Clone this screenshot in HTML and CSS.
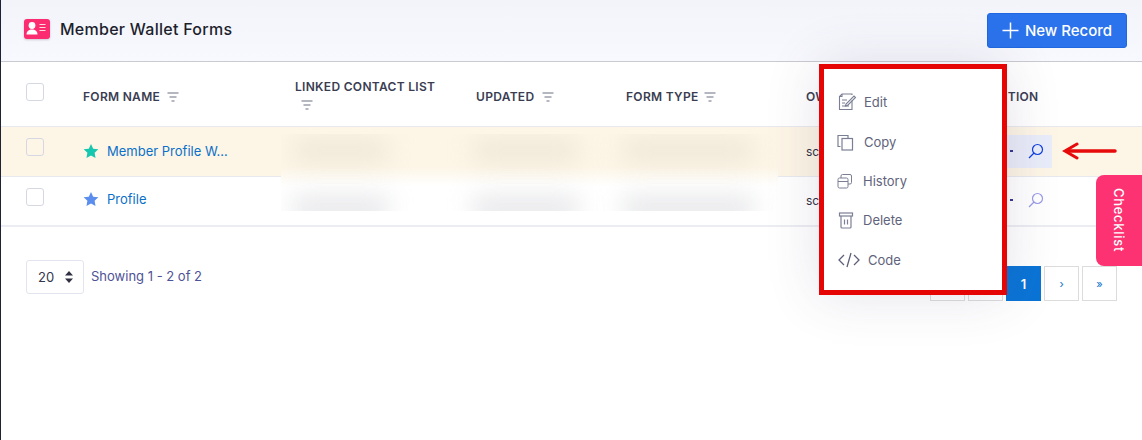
FILE: index.html
```html
<!DOCTYPE html>
<html lang="en">
<head>
<meta charset="utf-8">
<title>Member Wallet Forms</title>
<link rel="stylesheet" href="styles.css">
</head>
<body>
<div class="page">
  <header class="topbar">
    <div class="brand">
      <svg class="logo" width="28" height="22" viewBox="0 0 28 22">
        <rect x="1" y="1" width="26" height="20" rx="3" fill="#fb2c6f"/>
        <circle cx="9" cy="7.500" r="3.400" fill="#fff"/>
        <path d="M3.500 16.500c0-3.500 2.500-5 5.500-5s5.500 1.500 5.500 5z" fill="#fff"/>
        <path d="M16.500 6.500h6M16.500 9.500h6M16.500 12.500h6" stroke="#fdd" stroke-width="1.200"/>
      </svg>
      <h1 class="title">Member Wallet Forms</h1>
    </div>
    <button class="new-btn">
      <svg width="17" height="17" viewBox="0 0 17 17"><path d="M8.500 .5v16M.5 8.500h16" stroke="#fff" stroke-width="1.500"/></svg>
      New Record
    </button>
  </header>

  <table class="grid">
    <colgroup>
      <col class="c1"><col class="c2"><col class="c3"><col class="c4"><col class="c5"><col class="c6"><col>
    </colgroup>
    <thead>
      <tr>
        <th class="check-cell"><span class="box"></span></th>
        <th>FORM NAME <svg class="filt" width="12" height="10" viewBox="0 0 12 10"><path d="M.5 1h11M2.500 5h7M4.500 9h3" stroke="#6d7082" stroke-width="1.100"/></svg></th>
        <th class="wrap">LINKED CONTACT LIST<br><svg class="filt second" width="12" height="10" viewBox="0 0 12 10"><path d="M.5 1h11M2.500 5h7M4.500 9h3" stroke="#6d7082" stroke-width="1.100"/></svg></th>
        <th>UPDATED <svg class="filt" width="12" height="10" viewBox="0 0 12 10"><path d="M.5 1h11M2.500 5h7M4.500 9h3" stroke="#6d7082" stroke-width="1.100"/></svg></th>
        <th>FORM TYPE <svg class="filt tight" width="12" height="10" viewBox="0 0 12 10"><path d="M.5 1h11M2.500 5h7M4.500 9h3" stroke="#6d7082" stroke-width="1.100"/></svg></th>
        <th>OWNER</th>
        <th>ACTION</th>
      </tr>
    </thead>
    <tbody>
      <tr class="hl">
        <td class="check-cell"><span class="box"></span></td>
        <td class="name"><svg class="star" width="16" height="16" viewBox="0 0 24 24"><path d="M12 1.500l3.300 7 7.700 1-5.600 5.300 1.400 7.700-6.800-3.800-6.800 3.800 1.400-7.700L1 9.500l7.700-1z" fill="#15c7ae"/></svg><a class="link">Member Profile W…</a></td>
        <td></td><td></td><td></td>
        <td class="owner">scott</td>
        <td class="act"><span class="act-pill"><span class="dot"></span><svg width="16" height="16" viewBox="0 0 16 16" fill="none"><circle cx="9.500" cy="6.500" r="5" stroke="#0f3fe0" stroke-width="1.200"/><path d="M6 10l-5 5" stroke="#0f3fe0" stroke-width="1.200"/></svg></span></td>
      </tr>
      <tr class="second-row">
        <td class="check-cell"><span class="box"></span></td>
        <td class="name"><svg class="star" width="16" height="16" viewBox="0 0 24 24"><path d="M12 1.500l3.300 7 7.700 1-5.600 5.300 1.400 7.700-6.800-3.800-6.800 3.800 1.400-7.700L1 9.500l7.700-1z" fill="#5b8def"/></svg><a class="link">Profile</a></td>
        <td></td><td></td><td></td>
        <td class="owner">scott</td>
        <td class="act"><span class="act-pill plain"><span class="dot"></span><svg width="16" height="16" viewBox="0 0 16 16" fill="none"><circle cx="9.500" cy="6.500" r="5" stroke="#9a9be8" stroke-width="1.200"/><path d="M6 10l-5 5" stroke="#9a9be8" stroke-width="1.200"/></svg></span></td>
      </tr>
    </tbody>
  </table>

  <footer class="foot">
    <div class="foot-left">
      <div class="size">20
        <svg width="10" height="12" viewBox="0 0 10 12"><path d="M5 0l4 4.500H1zM5 12L1 7.500h8z" fill="#2f3142"/></svg>
      </div>
      <span class="showing">Showing 1 - 2 of 2</span>
    </div>
    <nav class="pager">
      <span class="pg">«</span><span class="pg">‹</span><span class="pg on">1</span><span class="pg">›</span><span class="pg">»</span>
    </nav>
  </footer>

  <div class="smudges">
    <div class="smudge-row">
      <span class="sm s1"></span><span class="sm s2"></span><span class="sm s3"></span>
    </div>
    <div class="smudge-row low">
      <span class="sm s1"></span><span class="sm s2"></span><span class="sm s3"></span>
    </div>
  </div>

  <div class="menu">
    <div class="mi i1">
      <svg width="20" height="20" viewBox="0 0 20 20" fill="none" stroke="#7b7f95" stroke-width="1.100"><path d="M15 8.500V17.500H2.500V4.500L5 2H15V3"/><path d="M5 2v2.500H2.500"/><path d="M5 8h5M5 11h3M5 14h7"/><path d="M9 12l-.5 2 2-.5 8-8-1.500-1.500z"/></svg>
      <span>Edit</span>
    </div>
    <div class="mi i2">
      <svg width="17" height="17" viewBox="0 0 17 17" fill="none" stroke="#7b7f95" stroke-width="1.200"><path d="M3.500 12.500H1V1.500h10V4"/><rect x="5" y="4.500" width="10.500" height="11.500"/></svg>
      <span>Copy</span>
    </div>
    <div class="mi i3">
      <svg width="17" height="17" viewBox="0 0 17 17" fill="none" stroke="#7b7f95" stroke-width="1"><rect x="1" y="5" width="10" height="10" rx="1.500"/><path d="M4 5V3a1.500 1.500 0 0 1 1.500-1.500H13A1.500 1.500 0 0 1 14.500 3v6.500A1.500 1.500 0 0 1 13 11h-2"/><path d="M1 8.500h10"/></svg>
      <span>History</span>
    </div>
    <div class="mi i4">
      <svg width="16" height="17" viewBox="0 0 16 17" fill="none" stroke="#7b7f95" stroke-width="1.200"><rect x="1.500" y="1" width="13" height="3"/><path d="M3 4v11a1 1 0 0 0 1 1h8a1 1 0 0 0 1-1V4"/><path d="M6.500 7.500v5M9.500 7.500v5"/></svg>
      <span>Delete</span>
    </div>
    <div class="mi i5">
      <svg width="22" height="16" viewBox="0 0 22 16" fill="none" stroke="#5c6078" stroke-width="1.300"><path d="M6 3L1 8l5 5M16 3l5 5-5 5M13 1L9 15"/></svg>
      <span>Code</span>
    </div>
  </div>

  <svg class="arrow" width="56" height="18" viewBox="0 0 56 18"><path d="M54 9H6" stroke="#e60a0a" stroke-width="3.500" stroke-linecap="round"/><path d="M16 2L4 9l12 7" fill="none" stroke="#e60a0a" stroke-width="3" stroke-linecap="round"/></svg>

  <div class="checklist"><span>Checklist</span></div>
</div>
</body>
</html>
```
FILE: styles.css
```css
* { box-sizing: border-box; }
html, body { margin: 0; padding: 0; }
body { background: #fff; font-family: Inter, "Noto Sans", sans-serif; color: #2f3142; }
.page { position: relative; width: 1142px; height: 440px; overflow: hidden; border-left: 1px solid #1f2233; }

.topbar { height: 62px; display: flex; align-items: center; justify-content: space-between; padding: 0 15px 1px 22px; background: linear-gradient(#f2f4fa, #f8f9fe); border-bottom: 1px solid #c9cad0; }
.brand { display: flex; align-items: center; gap: 9px; margin-bottom: 2px; }
.logo { display: block; filter: drop-shadow(0 1px 1px rgba(90, 60, 90, .25)); }
.title { margin: 0; font-size: 16px; font-weight: 500; color: #1d1f2e; letter-spacing: .27px; }
.new-btn { width: 140px; height: 35px; display: flex; align-items: center; justify-content: center; gap: 6px; border: 1px solid #1f68e0; border-radius: 3px; background: #2b73ec; color: #fff; font: 500 15px Inter, sans-serif; }

.grid { width: 1141px; border-collapse: collapse; table-layout: fixed; }
.c1 { width: 82px; } .c2 { width: 212px; } .c3 { width: 181px; } .c4 { width: 150px; } .c5 { width: 180px; } .c6 { width: 184px; }
th { height: 64px; padding: 6px 0 0; text-align: left; font-size: 12px; font-weight: 600; letter-spacing: .3px; color: #3a3d52; white-space: nowrap; border-bottom: 1px solid #e8e9ef; }
th.wrap { line-height: 18px; padding-top: 5px; }
.filt { margin-left: 4px; vertical-align: -1px; }
.filt.tight { margin-left: 2px; }
.filt.second { margin-left: 6px; }
td { padding: 0; font-size: 13px; border-bottom: 1px solid #e8e9ef; }
tbody tr { height: 50px; }
tbody tr:last-child td { border-bottom: 2px solid #ecedf3; }
.hl td { background: #fdf5e6; }
.check-cell { vertical-align: top; padding-left: 25px; }
th.check-cell { vertical-align: middle; padding-top: 0; padding-bottom: 4px; }
td.check-cell { padding-top: 11px; }
.box { display: block; width: 18px; height: 18px; border: 1px solid #d5d8e3; border-radius: 3px; background: transparent; }
.name { white-space: nowrap; }
.second-row .name { padding-bottom: 3px; }
.second-row .act { padding-bottom: 2px; }
.star { vertical-align: -3px; margin-right: 8px; }
.link { color: #0a70c9; font-size: 13px; }
.owner { font-size: 12px; color: #2f3142; }
.act-pill { display: inline-flex; align-items: center; gap: 15px; width: 52px; height: 33px; margin-left: 10px; padding-left: 10px; background: #e9ecf9; }
.act-pill.plain { background: none; }
.dot { width: 3px; height: 2px; background: #33368c; }

.foot { display: flex; justify-content: space-between; align-items: flex-start; padding: 33px 25px 0 25px; }
.foot-left { display: flex; align-items: center; gap: 7px; }
.size { width: 58px; height: 34px; display: flex; align-items: center; gap: 10px; padding-left: 11px; border: 1px solid #e3e5ee; border-radius: 3px; font-size: 13px; color: #34374a; }
.showing { font-size: 13px; color: #4e5296; margin-bottom: 2px; }
.pager { display: flex; gap: 3px; margin-top: 6px; }
.pg { width: 35px; height: 35px; display: flex; align-items: center; justify-content: center; border: 1px solid #dcdcdc; font-size: 11px; color: #0a70c9; background: #fff; }
.pg.on { background: #0a74d6; border-color: #0a74d6; color: #fff; font-size: 13px; font-weight: 600; }

.smudges { position: absolute; left: 280px; top: 134px; width: 497px; height: 77px; overflow: hidden; background: linear-gradient(#fdf5e6 0, #fdf5e6 32px, #fff 52px); }
.smudge-row { display: flex; height: 25px; margin-top: 4px; }
.smudge-row.low { height: 25px; margin-top: 33px; }
.sm { display: block; height: 100%; background: #e6dfd0; filter: blur(12px); opacity: .6; }
.low .sm { background: #dcdde0; opacity: .7; }
.s1 { width: 95px; margin-left: 12px; margin-right: 85px; }
.s2 { width: 105px; margin-right: 45px; }
.s3 { width: 130px; }

.menu { position: absolute; left: 818px; top: 64px; width: 188px; height: 231px; display: flex; flex-direction: column; background: #fff; border: 5px solid #e60505; box-shadow: 0 0 50px rgba(82, 63, 105, .16); font-size: 13px; color: #5f637c; }
.mi { display: flex; align-items: center; }
.mi.i1 { margin: 23px 0 0 13px; gap: 7px; height: 20px; }
.mi.i2 { margin: 20px 0 0 13px; gap: 10px; height: 20px; }
.mi.i3 { margin: 19px 0 0 13px; gap: 9px; height: 20px; }
.mi.i4 { margin: 19px 0 0 14px; gap: 9px; height: 20px; }
.mi.i5 { margin: 20px 0 0 14px; gap: 8px; height: 20px; }

.arrow { position: absolute; left: 1060px; top: 142px; }
.checklist { position: absolute; left: 1095px; top: 175px; width: 47px; height: 91px; display: flex; align-items: center; justify-content: center; padding-right: 2px; background: #fc3273; border-radius: 8px 0 0 8px; color: #fff; font-size: 13px; font-weight: 500; }
.checklist span { writing-mode: vertical-rl; letter-spacing: .7px; }
```
